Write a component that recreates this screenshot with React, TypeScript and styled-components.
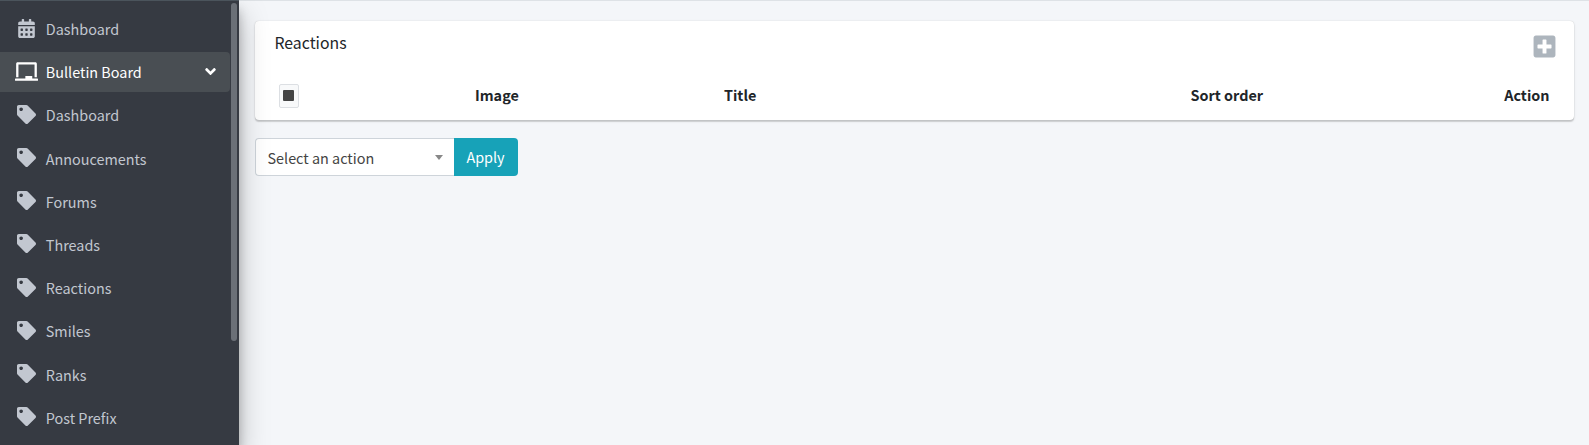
import React from "react";
import styled, { createGlobalStyle } from "styled-components";
import {
  FaAngleDown,
  FaCalendarAlt,
  FaChalkboard,
  FaPlusSquare,
  FaTag,
} from "react-icons/fa";

const GlobalStyle = createGlobalStyle`
  *, *::before, *::after { box-sizing: border-box; }
  body {
    margin: 0;
    overflow: hidden;
    background: #f4f6f9;
    color: #212529;
    font-family: "Source Sans Pro", "Noto Sans CJK SC", sans-serif;
    font-size: 14.4px;
    line-height: 24px;
  }
`;

const Page = styled.div`
  display: flex;
  height: 445px;
  overflow: hidden;
`;

const SidebarShell = styled.div`
  position: relative;
  z-index: 1;
  display: flex;
  flex: 0 0 239px;
  box-shadow: 0 14px 28px rgba(0, 0, 0, 0.25), 0 10px 10px rgba(0, 0, 0, 0.22);
`;

const Sidebar = styled.aside`
  position: relative;
  flex: 0 0 239px;
  overflow: hidden;
  background: #363a42;
  border-top: 1px solid #4b545c;
`;

const Nav = styled.nav`
  display: flex;
  flex-direction: column;
  gap: 3.2px;
  width: 230px;
  padding-top: 8px;
`;

const NavItem = styled.a<{ $active?: boolean }>`
  display: flex;
  flex: 0 0 40px;
  align-items: center;
  padding: 0 14px 0 12.5px;
  border-radius: 0 4px 4px 0;
  color: ${({ $active }) => ($active ? "#fff" : "#c2c7d0")};
  background: ${({ $active }) => ($active ? "#494e53" : "transparent")};
`;

const NavIcon = styled.span<{ $size: number }>`
  display: flex;
  justify-content: center;
  flex: 0 0 28px;
  margin-right: 5.3px;
  padding-bottom: 2px;

  svg {
    flex: none;
    width: ${({ $size }) => $size}px;
    height: ${({ $size }) => $size}px;
  }
`;

const NavLabel = styled.span`
  flex: 1;
  white-space: nowrap;
`;

const Caret = styled(FaAngleDown)`
  width: 17px;
  height: 17px;
  margin-right: -3px;
  margin-bottom: 2px;
`;

const ScrollThumb = styled.div`
  position: absolute;
  top: 2px;
  right: 2px;
  width: 6px;
  height: 338px;
  border-radius: 3px;
  background: #6b7077;
`;

const Content = styled.main`
  flex: 1;
  padding: 20px 15px 0 16px;
  border-top: 1px solid #dee2e6;
`;

const Card = styled.section`
  height: 99px;
  border-radius: 4px;
  background: #fff;
  box-shadow: 0 0 1px rgba(0, 0, 0, 0.2), 0 2px 1px rgba(0, 0, 0, 0.13),
    0 1px 3px rgba(0, 0, 0, 0.1);
`;

const CardHeader = styled.header`
  display: flex;
  justify-content: space-between;
  height: 50px;
  padding: 10px 17px 0 19.5px;
`;

const CardTitle = styled.h3`
  margin: 0;
  font-size: 15.8px;
  font-weight: 400;
  line-height: 24px;
`;

const AddButton = styled.button`
  display: flex;
  align-items: flex-start;
  padding: 2.5px 0 0;
  border: 0;
  background: none;
  color: #adb5bd;

  svg {
    width: 25px;
    height: 25px;
  }
`;

const HeaderRow = styled.div`
  display: grid;
  grid-template-columns: 196px 249px 466.5px 1fr auto;
  align-items: center;
  height: 49px;
  padding: 0 24.5px 0 24px;
  font-weight: 700;
`;

const HeaderCell = styled.span`
  padding-bottom: 2px;
`;

const SelectAll = styled.button`
  display: flex;
  align-items: center;
  justify-content: center;
  width: 20px;
  height: 24px;
  padding: 0 1px 0 0;
  border: 1px solid #dcdfe3;
  border-radius: 2px;
  background: #f8f9fa;

  &::before {
    content: "";
    width: 11px;
    height: 11px;
    border-radius: 1px;
    background: #444;
  }
`;

const BulkActions = styled.div`
  display: flex;
  margin-top: 18px;
`;

const Select = styled.div`
  display: flex;
  align-items: center;
  justify-content: space-between;
  width: 199px;
  height: 38px;
  padding: 2px 11px 0 11.5px;
  border: 1px solid #ced4da;
  border-right: 0;
  border-radius: 4px 0 0 4px;
  background: #fff;
  color: #444;

  &::after {
    content: "";
    margin-bottom: 2px;
    border: 4px solid transparent;
    border-top: 5px solid #888;
    border-bottom: 0;
  }
`;

const ApplyButton = styled.button`
  width: 64px;
  height: 38px;
  padding: 0 1px 1px 0;
  border: 0;
  border-radius: 0 4px 4px 0;
  background: #17a2b8;
  color: #fff;
  font: inherit;
`;

const sections = [
  "Dashboard",
  "Annoucements",
  "Forums",
  "Threads",
  "Reactions",
  "Smiles",
  "Ranks",
  "Post Prefix",
];

export default function App() {
  return (
    <>
      <GlobalStyle />
      <Page>
        <SidebarShell>
          <Sidebar>
            <Nav>
              <NavItem>
                <NavIcon $size={19}><FaCalendarAlt /></NavIcon>
                <NavLabel>Dashboard</NavLabel>
              </NavItem>
              <NavItem $active>
                <NavIcon $size={23}><FaChalkboard /></NavIcon>
                <NavLabel>Bulletin Board</NavLabel>
                <Caret />
              </NavItem>
              {sections.map((name) => (
                <NavItem key={name}>
                  <NavIcon $size={19}><FaTag /></NavIcon>
                  <NavLabel>{name}</NavLabel>
                </NavItem>
              ))}
            </Nav>
            <ScrollThumb />
          </Sidebar>
        </SidebarShell>
        <Content>
          <Card>
            <CardHeader>
              <CardTitle>Reactions</CardTitle>
              <AddButton aria-label="Add reaction"><FaPlusSquare /></AddButton>
            </CardHeader>
            <HeaderRow>
              <SelectAll aria-label="Select all" />
              <HeaderCell>Image</HeaderCell>
              <HeaderCell>Title</HeaderCell>
              <HeaderCell>Sort order</HeaderCell>
              <HeaderCell>Action</HeaderCell>
            </HeaderRow>
          </Card>
          <BulkActions>
            <Select>Select an action</Select>
            <ApplyButton>Apply</ApplyButton>
          </BulkActions>
        </Content>
      </Page>
    </>
  );
}
